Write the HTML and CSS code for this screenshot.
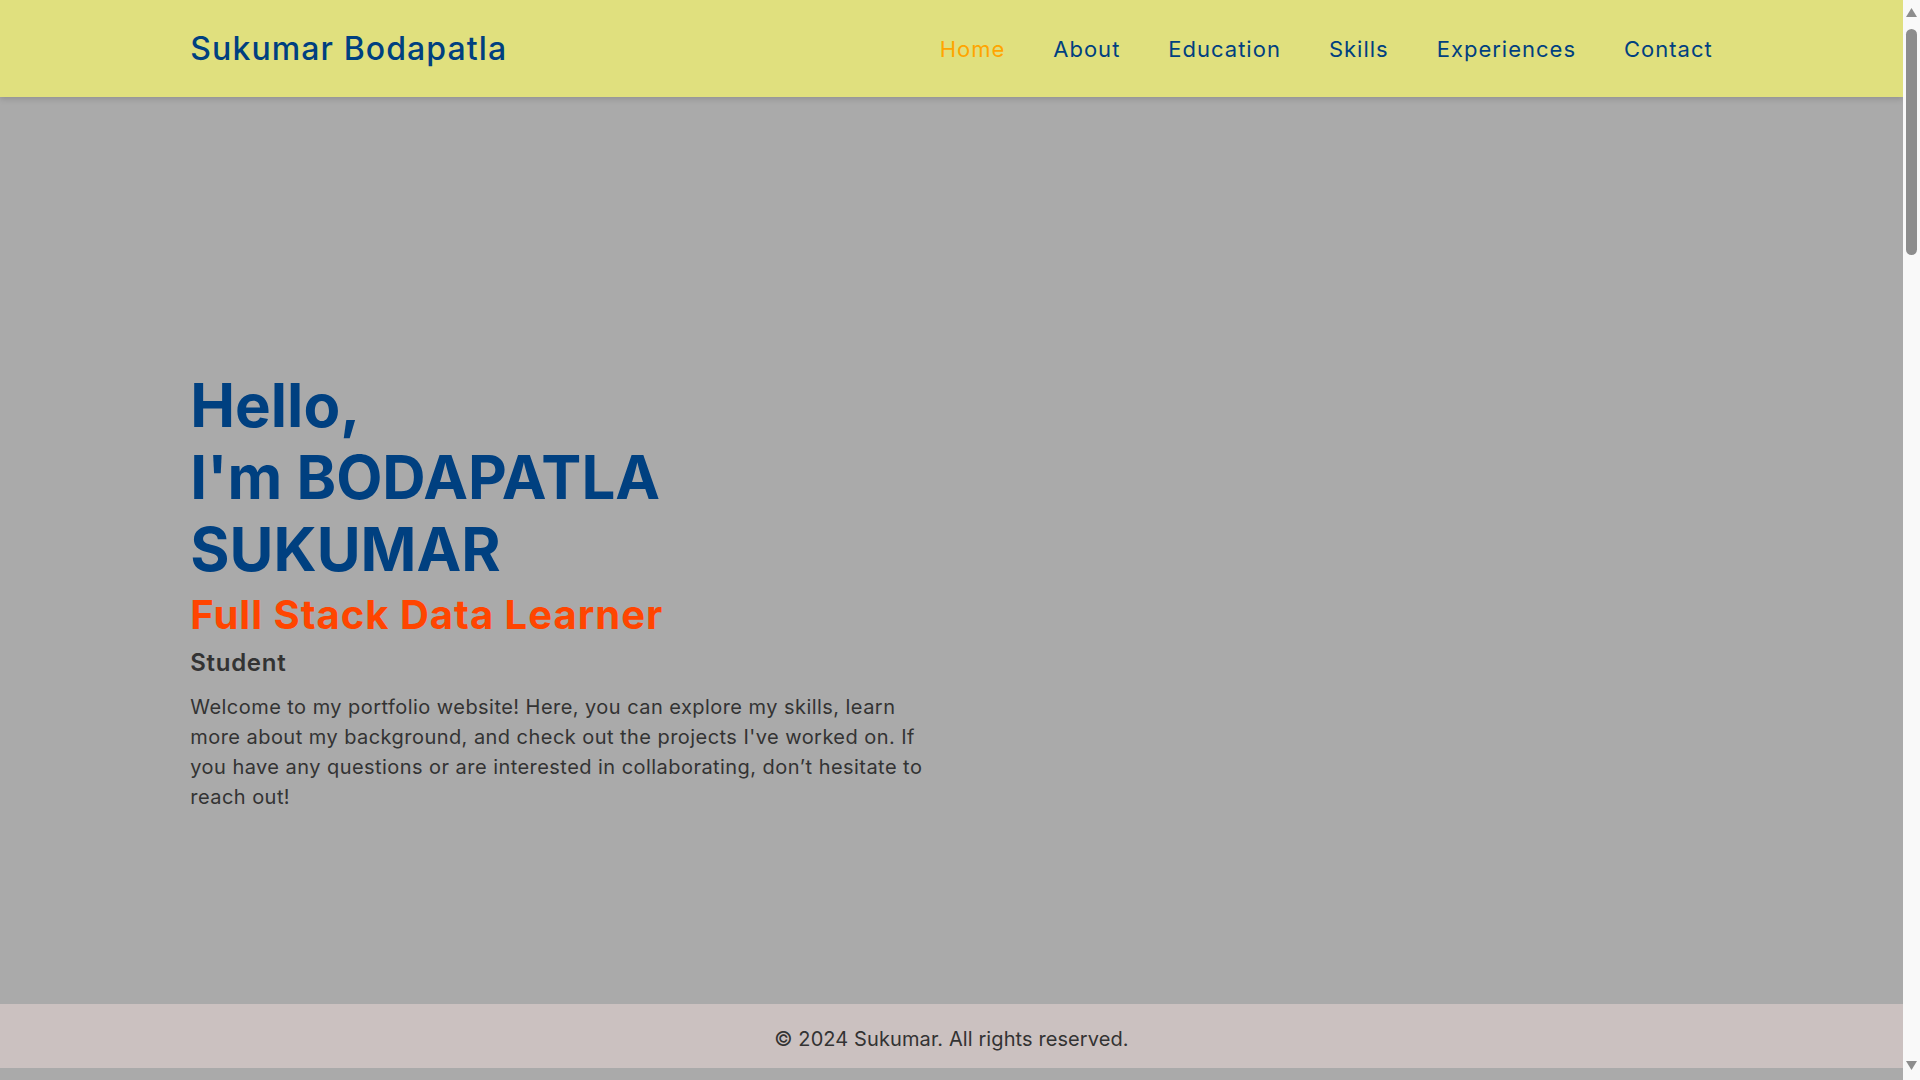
FILE: index.html
```html
<!DOCTYPE html>
<html lang="en">
<head>
<meta charset="utf-8">
<title>Sukumar Bodapatla</title>
<link rel="stylesheet" href="styles.css">
</head>
<body>
<div class="page">
  <header class="site-header">
    <div class="logo">Sukumar Bodapatla</div>
    <nav class="nav">
      <a class="nav-link active" href="#home">Home</a>
      <a class="nav-link" href="#about">About</a>
      <a class="nav-link" href="#education">Education</a>
      <a class="nav-link" href="#skills">Skills</a>
      <a class="nav-link" href="#experiences">Experiences</a>
      <a class="nav-link" href="#contact">Contact</a>
    </nav>
  </header>
  <section class="hero" id="home">
    <div class="hero-text">
      <h1 class="hero-title">Hello,<br>I'm BODAPATLA<br>SUKUMAR</h1>
      <h2 class="hero-role">Full Stack Data Learner</h2>
      <h3 class="hero-sub">Student</h3>
      <p class="hero-desc">Welcome to my portfolio website! Here, you can explore my skills, learn more about my background, and check out the projects I've worked on. If you have any questions or are interested in collaborating, don’t hesitate to reach out!</p>
    </div>
  </section>
  <footer class="site-footer">
    <p>© 2024 Sukumar. All rights reserved.</p>
  </footer>
  <div class="rest"></div>
</div>
<div class="scrollbar" aria-hidden="true">
  <svg class="sb-arrow sb-up" width="17" height="17" viewBox="0 0 17 17"><path d="M3 13 L8.5 4 L14 13 Z" fill="#8d8d8d"/></svg>
  <div class="sb-thumb"></div>
  <svg class="sb-arrow sb-down" width="17" height="17" viewBox="0 0 17 17"><path d="M3 4 L14 4 L8.5 13 Z" fill="#8d8d8d"/></svg>
</div>
</body>
</html>
```
FILE: styles.css
```css
* { box-sizing: border-box; }
html, body { margin: 0; padding: 0; }
body {
  font-family: "Inter", "DejaVu Sans", sans-serif;
  background: #aaaaaa;
  color: #333;
  overflow-x: hidden;
}
.page { margin-right: 17px; }
.site-header {
  height: 97px;
  background: #e0e07e;
  display: flex;
  align-items: center;
  justify-content: space-between;
  padding: 0 10%;
  box-shadow: 0 2px 6px rgba(0,0,0,0.15);
  position: relative;
  z-index: 2;
}
.logo {
  font-size: 32px;
  font-weight: 500;
  letter-spacing: 1.1px;
  color: #004080;
}
.nav { display: flex; gap: 48px; }
.nav-link {
  font-size: 22px;
  letter-spacing: 1px;
  color: #004080;
  text-decoration: none;
}
.nav-link.active { color: #ffa500; }
.hero {
  height: 907px;
  padding: 272px 10% 0;
}
.hero-text { width: 752px; }
.hero-title {
  margin: 0;
  font-size: 60px;
  line-height: 72px;
  font-weight: 700;
  color: #004080;
}
.hero-role {
  margin: 3px 0 0;
  font-size: 40px;
  line-height: 54px;
  font-weight: 700;
  letter-spacing: 1px;
  color: #ff4500;
}
.hero-sub {
  margin: 5px 0 0;
  font-size: 24px;
  line-height: 32px;
  font-weight: 600;
  letter-spacing: 0.7px;
  color: #333;
}
.hero-desc {
  margin: 13px 0 0;
  font-size: 20px;
  line-height: 30px;
  letter-spacing: 0.45px;
  color: #333;
}
.site-footer {
  height: 64px;
  background: #cbc1c0;
  display: flex;
  align-items: center;
  justify-content: center;
  padding-top: 6px;
}
.site-footer p { margin: 0; font-size: 20px; letter-spacing: 0.1px; color: #333; }
.rest { height: 3932px; }

.scrollbar {
  position: fixed;
  top: 0;
  right: 0;
  width: 17px;
  height: 100vh;
  background: #f9f9f9;
  z-index: 10;
}
.sb-arrow { position: absolute; left: 0; }
.sb-up { top: 4px; }
.sb-down { bottom: 6px; }
.sb-thumb {
  position: absolute;
  top: 29px;
  left: 3px;
  width: 11px;
  height: 226px;
  border-radius: 6px;
  background: #8d8d8d;
}
```
